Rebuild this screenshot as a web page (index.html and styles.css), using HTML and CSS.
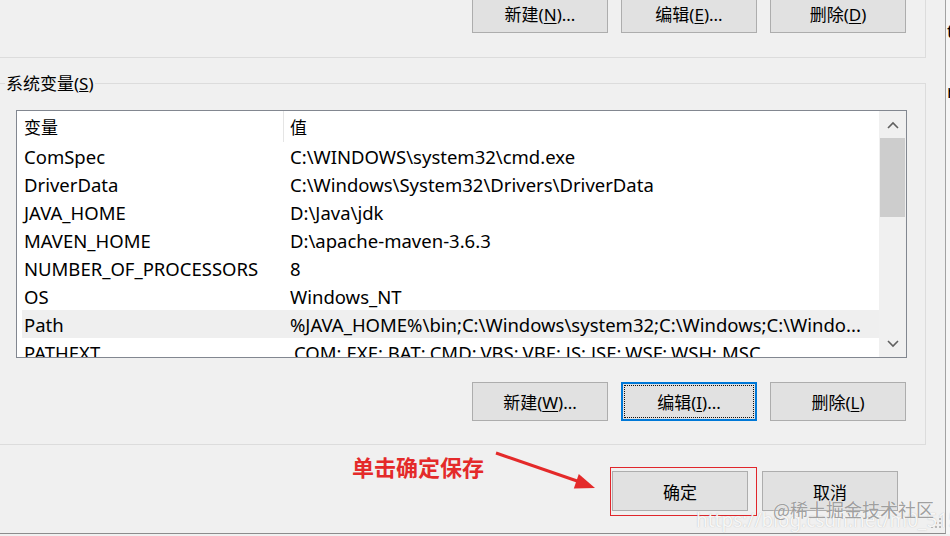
FILE: index.html
```html
<!DOCTYPE html>
<html lang="zh-CN">
<head>
    <meta charset="UTF-8">
    <title>环境变量</title>
    <link rel="stylesheet" href="styles.css">
</head>
<body>
    <div class="screen">
        <div class="dialog">
            <div class="group group-user">
                <div class="btn-row">
                    <button class="btn">新建(<u>N</u>)...</button>
                    <button class="btn">编辑(<u>E</u>)...</button>
                    <button class="btn">删除(<u>D</u>)</button>
                </div>
            </div>

            <div class="group group-sys">
                <div class="group-title">系统变量(<u>S</u>)</div>
                <div class="listview">
                    <div class="list-body">
                        <div class="list-head">
                            <div class="col-name">变量</div>
                            <div class="col-value">值</div>
                        </div>
                        <div class="list-row"><div class="col-name">ComSpec</div><div class="col-value">C:\WINDOWS\system32\cmd.exe</div></div>
                        <div class="list-row"><div class="col-name">DriverData</div><div class="col-value">C:\Windows\System32\Drivers\DriverData</div></div>
                        <div class="list-row"><div class="col-name">JAVA_HOME</div><div class="col-value">D:\Java\jdk</div></div>
                        <div class="list-row"><div class="col-name">MAVEN_HOME</div><div class="col-value">D:\apache-maven-3.6.3</div></div>
                        <div class="list-row"><div class="col-name">NUMBER_OF_PROCESSORS</div><div class="col-value">8</div></div>
                        <div class="list-row"><div class="col-name">OS</div><div class="col-value">Windows_NT</div></div>
                        <div class="list-row selected"><div class="col-name">Path</div><div class="col-value">%JAVA_HOME%\bin;C:\Windows\system32;C:\Windows;C:\Windo...</div></div>
                        <div class="list-row"><div class="col-name">PATHEXT</div><div class="col-value">.COM;.EXE;.BAT;.CMD;.VBS;.VBE;.JS;.JSE;.WSF;.WSH;.MSC</div></div>
                    </div>
                    <div class="vscroll">
                        <div class="scroll-arrow">
                            <svg width="12" height="8" viewBox="0 0 12 8"><path d="M1 7 L6 2 L11 7" fill="none" stroke="#606060" stroke-width="1.6"/></svg>
                        </div>
                        <div class="scroll-track"><div class="scroll-thumb"></div></div>
                        <div class="scroll-arrow">
                            <svg width="12" height="8" viewBox="0 0 12 8"><path d="M1 1 L6 6 L11 1" fill="none" stroke="#606060" stroke-width="1.6"/></svg>
                        </div>
                    </div>
                </div>
                <div class="btn-row">
                    <button class="btn">新建(<u>W</u>)...</button>
                    <button class="btn focused">编辑(<u>I</u>)...</button>
                    <button class="btn">删除(<u>L</u>)</button>
                </div>
            </div>

            <div class="dialog-foot">
                <button class="btn btn-ok">确定</button>
                <button class="btn">取消</button>
            </div>

            <!-- annotation drawn on top of the screenshot -->
            <div class="mark-text">单击确定保存</div>
            <svg class="mark-arrow" width="110" height="45" viewBox="494 450 110 45">
                <line x1="496" y1="453" x2="580" y2="482" stroke="#e42a2a" stroke-width="3"/>
                <polygon points="595,488 573.8,488.5 578.8,474" fill="#e42a2a"/>
            </svg>
            <div class="mark-box"></div>

            <svg class="grip" width="14" height="14" viewBox="0 0 14 14">
                <rect x="10" y="2" width="2" height="2" fill="#b9b9b9"/>
                <rect x="6" y="6" width="2" height="2" fill="#b9b9b9"/>
                <rect x="10" y="6" width="2" height="2" fill="#b9b9b9"/>
                <rect x="2" y="10" width="2" height="2" fill="#b9b9b9"/>
                <rect x="6" y="10" width="2" height="2" fill="#b9b9b9"/>
                <rect x="10" y="10" width="2" height="2" fill="#b9b9b9"/>
            </svg>
        </div>
        <div class="backwin">
            <span class="bw-t">t</span>
            <span class="bw-r">r</span>
        </div>
        <div class="watermark-url">https://blog.csdn.net/m0_51523841606</div>
        <div class="watermark">@稀土掘金技术社区</div>
    </div>
</body>
</html>
```

FILE: styles.css
```css
*{
    margin: 0;
    padding: 0;
    box-sizing: border-box;
}
body{
    background-color: #f0f0f0;
    font-family: "Noto Sans", "Noto Sans CJK SC", sans-serif;
    font-size: 17px;
    color: #000;
    overflow: hidden;
}
.screen{
    position: relative;
    width: 950px;
    height: 536px;
    display: flex;
    overflow: hidden;
}
.dialog{
    position: relative;
    width: 946px;
    height: 534px;
    border-right: 1px solid #a2a2a2;
    border-bottom: 1px solid #8c8c8c;
    overflow: hidden;
}
.backwin{
    flex: 1;
    height: 534px;
    background-color: #f6f6f6;
    font-size: 18px;
    overflow: hidden;
    display: flex;
    flex-direction: column;
    padding-left: 1px;
}
.bw-t{
    margin-top: 20px;
    line-height: 22px;
}
.bw-r{
    margin-top: 38px;
    line-height: 22px;
}

/* group boxes */
.group{
    width: 926px;
    border-right: 1px solid #dcdcdc;
    border-bottom: 1px solid #dcdcdc;
}
.group-user{
    display: flow-root;
    height: 58px;
}
.group-sys{
    margin-top: 25px;
    border-top: 1px solid #dcdcdc;
    padding-bottom: 23px;
}
.group-title{
    width: fit-content;
    margin: -11px 0 0 5px;
    padding: 0 1px;
    line-height: 22px;
    background-color: #f0f0f0;
}
.btn-row{
    display: flex;
    justify-content: flex-end;
    gap: 13px;
    padding-right: 19px;
}
.group-user .btn-row{
    margin-top: -6px;
}
.group-sys .btn-row{
    margin-top: 24px;
}

/* buttons */
.btn{
    width: 136px;
    height: 39px;
    font-family: inherit;
    font-size: 17px;
    color: #000;
    background-color: #e1e1e1;
    border: 1px solid #adadad;
}
.btn u{
    text-underline-offset: 2px;
}
.btn.focused{
    border: 2px solid #0078d7;
    outline: 1px dotted #111;
    outline-offset: -4px;
}

/* list view */
.listview{
    margin: 15px 0 0 16px;
    width: 891px;
    height: 248px;
    border: 1px solid #828790;
    background-color: #fff;
    display: flex;
}
.list-body{
    flex: 1;
    overflow: hidden;
    font-size: 18.5px;
}
.list-head{
    height: 31px;
    display: flex;
    font-size: 17px;
}
.list-head .col-name{
    width: 267px;
    padding-left: 7px;
    border-right: 1px solid #e5e5e5;
}
.list-head .col-value{
    padding-left: 6px;
}
.list-head div,
.list-row div{
    display: flex;
    align-items: center;
    white-space: nowrap;
}
.list-row{
    height: 28px;
    margin-left: 5px;
    display: flex;
}
.list-row .col-name{
    width: 262px;
    padding-left: 2px;
}
.list-row .col-value{
    padding-left: 6px;
}
.list-row.selected{
    background-color: #efefef;
}

.vscroll{
    width: 27px;
    background-color: #f0f0f0;
    display: flex;
    flex-direction: column;
}
.scroll-arrow{
    height: 27px;
    display: flex;
    align-items: center;
    justify-content: center;
}
.scroll-track{
    flex: 1;
}
.scroll-thumb{
    height: 79px;
    margin: 0 1px;
    background-color: #cdcdcd;
}

/* OK / Cancel */
.dialog-foot{
    display: flex;
    justify-content: flex-end;
    gap: 14px;
    margin-top: 26px;
    padding-right: 47px;
}
.dialog-foot .btn{
    height: 40px;
}

/* annotation + watermark overlays */
.mark-text{
    position: absolute;
    left: 352px;
    top: 450px;
    font-size: 22px;
    font-weight: 700;
    color: #e42a2a;
    font-family: "Noto Sans CJK SC", sans-serif;
}
.mark-arrow{
    position: absolute;
    left: 494px;
    top: 450px;
}
.mark-box{
    position: absolute;
    left: 610px;
    top: 467px;
    width: 147px;
    height: 49px;
    border: 1px solid #e0262b;
}
.grip{
    position: absolute;
    left: 929px;
    top: 516px;
}
.watermark{
    position: absolute;
    left: 773px;
    top: 496px;
    font-size: 18px;
    font-family: "Noto Sans CJK SC", sans-serif;
    color: rgba(105, 105, 105, 0.65);
    text-shadow: 0 0 1px #fff;
    white-space: nowrap;
}
.watermark-url{
    position: absolute;
    left: 696px;
    top: 507px;
    font-size: 19px;
    color: rgba(255, 255, 255, 0.9);
    text-shadow: 0 0 1px rgba(120, 120, 120, 0.5);
    white-space: nowrap;
}
```
